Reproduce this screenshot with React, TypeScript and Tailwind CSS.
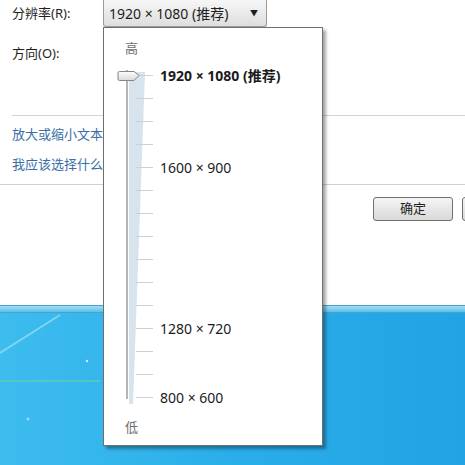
import React from 'react'

const FONT = { fontFamily: '"Noto Sans", "Noto Sans CJK SC", sans-serif' }

// 15 notches on the resolution slider; only some carry a label
const NOTCHES: { label?: string; bold?: boolean }[] = [
  { label: '1920 × 1080 (推荐)', bold: true },
  {}, {}, {},
  { label: '1600 × 900' },
  {}, {}, {}, {}, {}, {},
  { label: '1280 × 720' },
  {}, {},
  { label: '800 × 600' },
]

function SliderArt() {
  return (
    <svg className="absolute inset-0" width="220" height="345" viewBox="0 0 220 345">
      <defs>
        <linearGradient id="thumb" x1="0" y1="0" x2="0" y2="1">
          <stop offset="0" stopColor="#fdfdfd" />
          <stop offset="1" stopColor="#d9d9d9" />
        </linearGradient>
      </defs>
      <polygon points="25,8 41,8 29,340 25,340" fill="#d7e3ed" />
      <line x1="23" y1="6" x2="23" y2="335" stroke="#9e9e9e" strokeWidth="1.5" />
      {NOTCHES.map((_, i) => (
        <line key={i} x1="32" x2="49" y1={11.5 + i * 23} y2={11.5 + i * 23} stroke="#c9d0d6" strokeWidth="1" />
      ))}
      <path
        d="M15.5 7.5 H30 L35 11.5 L30 16.5 H15.5 Q14 16.5 14 15 V9 Q14 7.5 15.5 7.5 Z"
        fill="url(#thumb)"
        stroke="#858585"
        strokeWidth="1"
      />
    </svg>
  )
}

function ResolutionPopup() {
  return (
    <div className="absolute left-[103px] top-[27px] w-[220px] h-[419px] bg-white border border-[#6f6f6f] shadow-[3px_3px_3px_rgba(0,0,0,0.35)]">
      <div className="pl-[21px] pt-[12px] h-[36px] text-[13px] leading-[16px] text-[#6d6d6d]">高</div>
      <div className="relative h-[345px]">
        <SliderArt />
        <div className="relative flex flex-col">
          {NOTCHES.map((n, i) => (
            <div key={i} className="h-[23px] flex items-center pl-[56px]">
              {n.label && (
                <span className={`text-[14px] text-[#1b1b1b] ${n.bold ? 'font-bold' : ''}`}>{n.label}</span>
              )}
            </div>
          ))}
        </div>
      </div>
      <div className="pl-[21px] pt-[10px] text-[13px] leading-[16px] text-[#6d6d6d]">低</div>
    </div>
  )
}

function Desktop() {
  return (
    <div className="relative flex-1 bg-gradient-to-r from-[#3dbcee] via-[#2aaee9] to-[#22a3e4] overflow-hidden">
      <svg className="absolute inset-0" width="465" height="152" viewBox="0 0 465 152">
        <line x1="0" y1="40" x2="60" y2="2" stroke="#9fe0f6" strokeWidth="2" opacity="0.7" />
        <line x1="0" y1="68" x2="100" y2="68" stroke="#6fd49a" strokeWidth="1.5" opacity="0.7" />
        <circle cx="87" cy="48" r="1.2" fill="#c9f1ff" />
        <circle cx="28" cy="106" r="1.5" fill="#8fdcf5" />
      </svg>
    </div>
  )
}

export default function App() {
  return (
    <div className="relative w-[465px] h-[465px] overflow-hidden flex flex-col bg-white" style={FONT}>
      {/* dialog body */}
      <div className="h-[305px] bg-white flex flex-col text-[13px] text-[#1e1e1e]">
        <div className="flex items-center h-[27px]">
          <span className="w-[103px] pl-3">分辨率(R):</span>
          <div className="w-[164px] h-[27px] flex items-center justify-between px-[5px] border border-t-0 border-[#9a9a9a] rounded-b-[3px] bg-gradient-to-b from-[#f6f6f6] to-[#dedede]">
            <span className="text-[14px]">1920 × 1080 (推荐)</span>
            <span className="text-[8px] mr-[3px]">▼</span>
          </div>
        </div>
        <div className="pl-3 mt-[18px] h-[16px] leading-[16px]">方向(O):</div>
        <div className="ml-3 mt-[54px] border-t border-[#d4d4d4]" />
        <div className="pl-3 mt-[9px] flex flex-col gap-[12px] text-[13px] leading-[18px] text-[#3a6ea8]">
          <span>放大或缩小文本和其他项目</span>
          <span>我应该选择什么显示器设置?</span>
        </div>
        <div className="mt-[11px] border-t border-[#d0d0d0]" />
        <div className="flex pl-[373px] mt-[12px] gap-[9px]">
          <button className="w-[80px] h-[24px] shrink-0 text-[13px] border border-[#707070] rounded-[3px] bg-gradient-to-b from-[#f5f5f5] to-[#d9d9d9]">
            确定
          </button>
          <button className="w-[80px] h-[24px] shrink-0 text-[13px] border border-[#707070] rounded-[3px] bg-gradient-to-b from-[#f5f5f5] to-[#d9d9d9]">
            取消
          </button>
        </div>
      </div>
      {/* window frame bottom edge */}
      <div className="h-[8px] border-t border-b border-[#4c9fcf] bg-gradient-to-b from-[#9fe0f3] to-[#5cc0e8]" />
      <Desktop />
      <ResolutionPopup />
    </div>
  )
}
